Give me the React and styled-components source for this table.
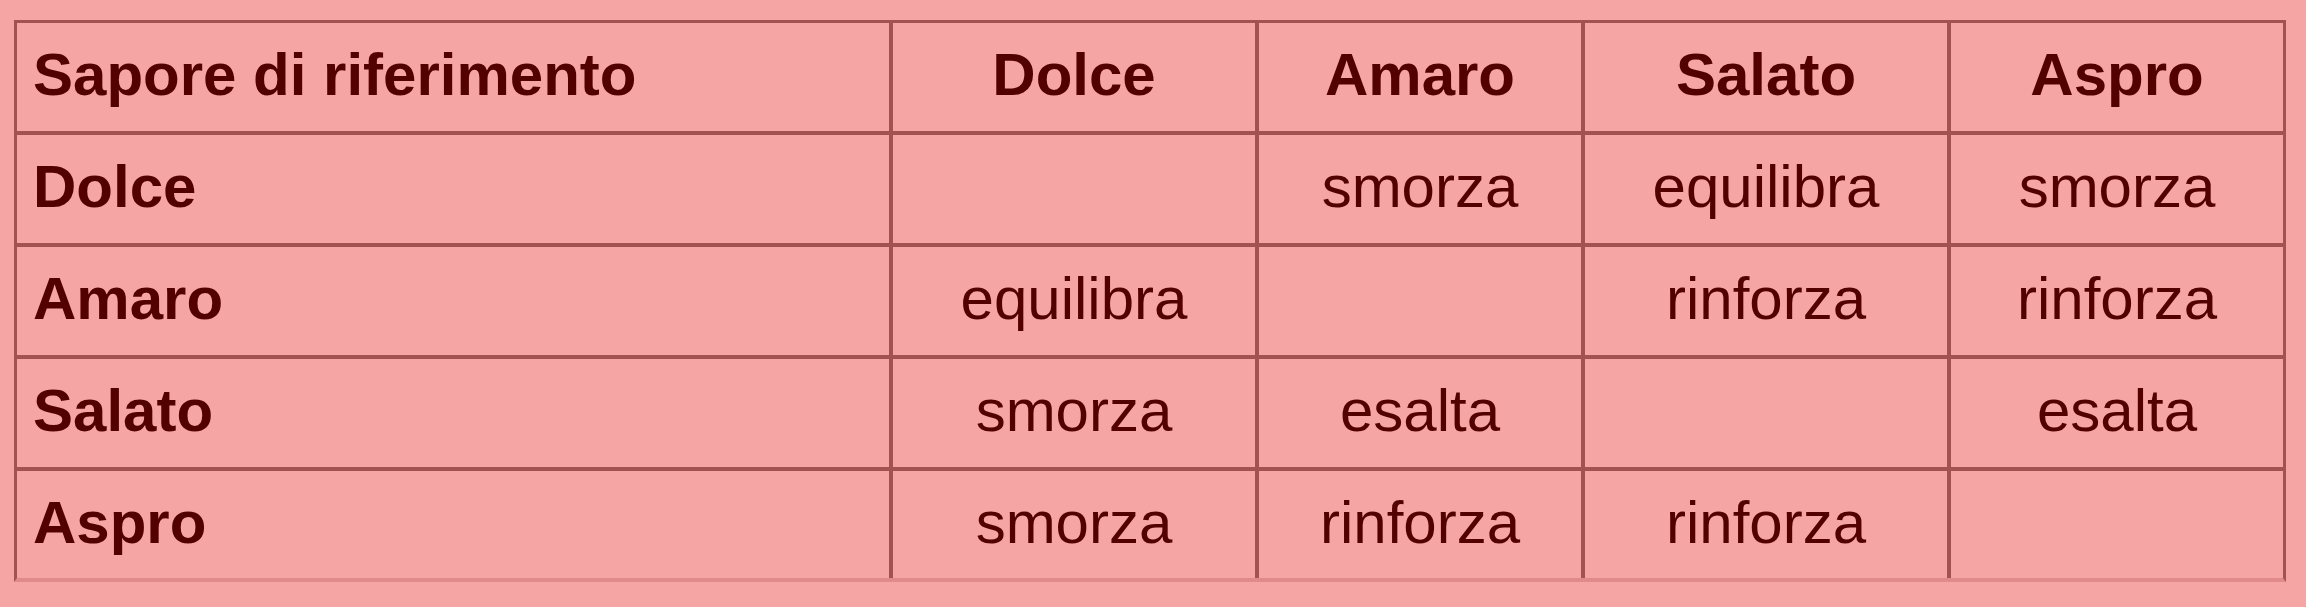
import React from 'react';
import styled, { createGlobalStyle } from 'styled-components';

const GlobalStyle = createGlobalStyle`
  html, body {
    margin: 0;
    padding: 0;
    background: #f5a5a3;
  }
  body {
    font-family: "Liberation Sans", Arial, sans-serif;
  }
`;

const Page = styled.div`
  width: 2306px;
  height: 607px;
  box-sizing: border-box;
  padding: 20px 14px 0;
  background: #f5a5a3;
`;

const Table = styled.div`
  display: grid;
  grid-template-columns: 876px 366px 326px 366px 332px;
  grid-template-rows: repeat(4, 112px) 107px;
  width: max-content;
  border-top: 3px solid #a35252;
  border-left: 3px solid #a35252;
  border-right: 3px solid #a35252;
  border-bottom: 4px solid #e08b89;

  & > :nth-child(5n) {
    border-right: none;
  }
  & > :nth-last-child(-n + 5) {
    border-bottom: none;
  }
`;

const Cell = styled.div`
  box-sizing: border-box;
  display: flex;
  align-items: center;
  justify-content: ${(p) => (p.$left ? 'flex-start' : 'center')};
  padding: 0 16px 4px;
  border-right: 4px solid #a35252;
  border-bottom: 4px solid #a35252;
  color: #530000;
  font-size: 60px;
  font-weight: ${(p) => (p.$bold ? 700 : 400)};
  line-height: 1;
  white-space: nowrap;
`;

const tastes = ['Dolce', 'Amaro', 'Salato', 'Aspro'];

const rows = [
  ['Dolce', '', 'smorza', 'equilibra', 'smorza'],
  ['Amaro', 'equilibra', '', 'rinforza', 'rinforza'],
  ['Salato', 'smorza', 'esalta', '', 'esalta'],
  ['Aspro', 'smorza', 'rinforza', 'rinforza', ''],
];

export default function App() {
  return (
    <>
      <GlobalStyle />
      <Page>
        <Table>
          <Cell $left $bold>Sapore di riferimento</Cell>
          {tastes.map((t) => (
            <Cell key={t} $bold>{t}</Cell>
          ))}
          {rows.map((row) =>
            row.map((v, i) => (
              <Cell key={row[0] + i} $left={i === 0} $bold={i === 0}>
                {v}
              </Cell>
            ))
          )}
        </Table>
      </Page>
    </>
  );
}
